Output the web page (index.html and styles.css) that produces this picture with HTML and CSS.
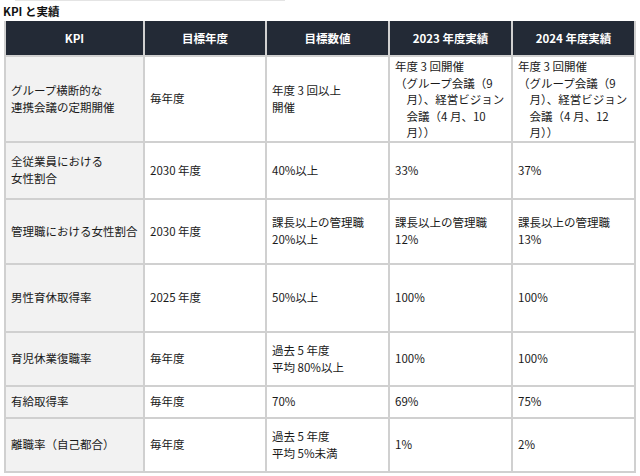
FILE: index.html
```html
<!DOCTYPE html>
<html lang="ja">
<head>
<meta charset="utf-8">
<link rel="stylesheet" href="styles.css">
</head>
<body>
<div class="topline"></div>
<h2 class="title">KPI と実績</h2>
<table class="kpi">
  <colgroup>
    <col class="c1"><col class="c2"><col class="c3"><col class="c4"><col class="c5">
  </colgroup>
  <thead>
    <tr class="hd">
      <th>KPI</th><th>目標年度</th><th>目標数値</th><th>2023 年度実績</th><th>2024 年度実績</th>
    </tr>
  </thead>
  <tbody>
    <tr class="r1">
      <td class="name">グループ横断的な<br>連携会議の定期開催</td>
      <td>毎年度</td>
      <td>年度 3 回以上<br>開催</td>
      <td class="top">年度 3 回開催<span class="hang">（グループ会議（9 月）、経営ビジョン会議（4 月、10 月））</span></td>
      <td class="top">年度 3 回開催<span class="hang">（グループ会議（9 月）、経営ビジョン会議（4 月、12 月））</span></td>
    </tr>
    <tr class="r2">
      <td class="name">全従業員における<br>女性割合</td>
      <td>2030 年度</td>
      <td>40%以上</td>
      <td>33%</td>
      <td>37%</td>
    </tr>
    <tr class="r3">
      <td class="name">管理職における女性割合</td>
      <td>2030 年度</td>
      <td>課長以上の管理職<br>20%以上</td>
      <td>課長以上の管理職<br>12%</td>
      <td>課長以上の管理職<br>13%</td>
    </tr>
    <tr class="r4">
      <td class="name">男性育休取得率</td>
      <td>2025 年度</td>
      <td>50%以上</td>
      <td>100%</td>
      <td>100%</td>
    </tr>
    <tr class="r5">
      <td class="name">育児休業復職率</td>
      <td>毎年度</td>
      <td>過去 5 年度<br>平均 80%以上</td>
      <td>100%</td>
      <td>100%</td>
    </tr>
    <tr class="r6">
      <td class="name">有給取得率</td>
      <td>毎年度</td>
      <td>70%</td>
      <td>69%</td>
      <td>75%</td>
    </tr>
    <tr class="r7">
      <td class="name">離職率（自己都合）</td>
      <td>毎年度</td>
      <td>過去 5 年度<br>平均 5%未満</td>
      <td>1%</td>
      <td>2%</td>
    </tr>
  </tbody>
</table>
</body>
</html>
```
FILE: styles.css
```css
html, body {
  margin: 0;
  padding: 0;
  background: #ffffff;
}
body {
  font-family: "Noto Sans CJK JP", "Noto Sans", sans-serif;
  color: #1a1a1a;
  font-size: 11.5px;
  width: 640px;
  height: 476px;
  overflow: hidden;
}
.topline {
  height: 1px;
  margin-left: 15px;
  width: 270px;
  background: #e4e4e4;
}
.title {
  margin: 0;
  padding-left: 3px;
  height: 20px;
  line-height: 20px;
  font-size: 11.5px;
  font-weight: 700;
  color: #111111;
}
.kpi {
  margin-left: 4px;
  border-collapse: collapse;
  table-layout: fixed;
  width: 630px;
}
.c1 { width: 139px; }
.c2 { width: 122px; }
.c3 { width: 123px; }
.c4 { width: 123px; }
.c5 { width: 123px; }
.kpi th {
  background: #232a36;
  color: #ffffff;
  font-weight: 700;
  font-size: 11.5px;
  height: 35px;
  padding: 0 4px;
  text-align: center;
  border: 2px solid #d0d0d0;
  border-top: none;
  box-sizing: border-box;
}
.kpi td {
  border: 2px solid #d0d0d0;
  padding: 0 1px 0 5px;
  vertical-align: middle;
  line-height: 17px;
  box-sizing: border-box;
}
.kpi td.name {
  background: #f2f2f2;
}
.kpi td.top {
  vertical-align: top;
  padding-top: 1px;
  line-height: 16.5px;
}
.hang {
  display: block;
  padding-left: 1em;
  text-indent: -1em;
}
.r1 { height: 85px; }
.r2 { height: 57px; }
.r3 { height: 65px; }
.r4 { height: 68px; }
.r5 { height: 54px; }
.r6 { height: 32px; }
.r7 { height: 54px; }
```
